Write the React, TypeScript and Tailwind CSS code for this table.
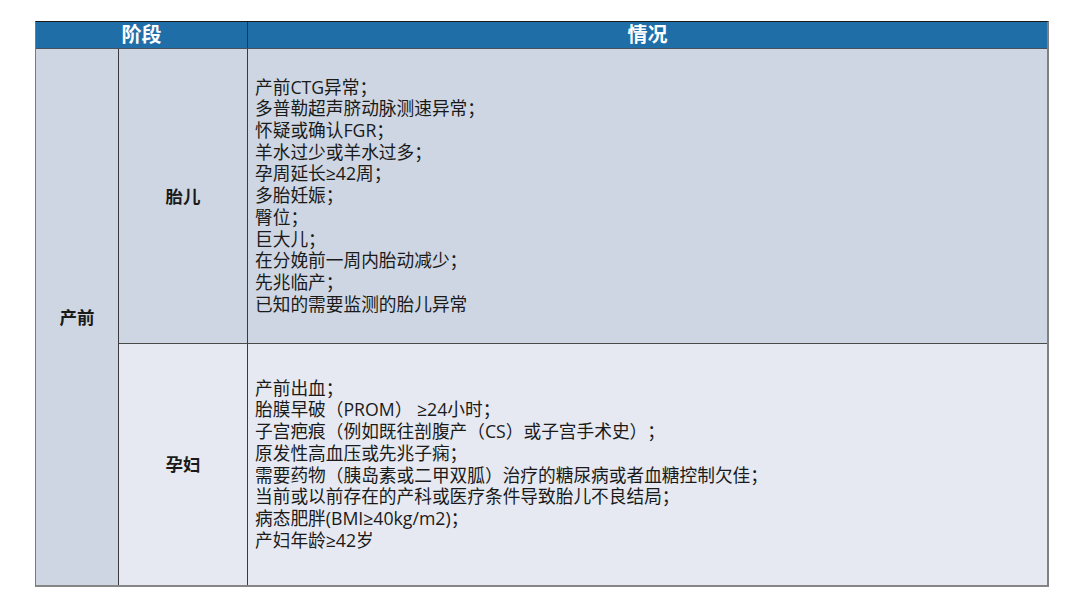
import React from "react";

const font = { fontFamily: '"Open Sans", "Noto Sans CJK SC", "Noto Sans", sans-serif' };

const fetal = [
  "产前CTG异常；",
  "多普勒超声脐动脉测速异常；",
  "怀疑或确认FGR；",
  "羊水过少或羊水过多；",
  "孕周延长≥42周；",
  "多胎妊娠；",
  "臀位；",
  "巨大儿；",
  "在分娩前一周内胎动减少；",
  "先兆临产；",
  "已知的需要监测的胎儿异常",
];

const maternal = [
  "产前出血；",
  "胎膜早破（PROM） ≥24小时；",
  "子宫疤痕（例如既往剖腹产（CS）或子宫手术史）；",
  "原发性高血压或先兆子痫；",
  "需要药物（胰岛素或二甲双胍）治疗的糖尿病或者血糖控制欠佳；",
  "当前或以前存在的产科或医疗条件导致胎儿不良结局；",
  "病态肥胖(BMI≥40kg/m2)；",
  "产妇年龄≥42岁",
];

export default function App() {
  return (
    <div className="w-[1080px] h-[608px] bg-white pt-[21px] pl-[35px] [text-spacing-trim:space-all]" style={font}>
      <div className="w-[1014px] border-t border-t-[#1a1a1a] border-l border-l-[#7a7a7a] border-r-2 border-r-[#808080] border-b-2 border-b-[#858585]">
        <div className="flex h-[27px] bg-[#1f6ea8] border-b border-b-[#4a4f5a] text-white font-bold text-[20px] leading-[26px]">
          <div className="w-[212px] border-r border-r-[#2a3340] flex items-center justify-center">阶段</div>
          <div className="flex-1 flex items-center justify-center">情况</div>
        </div>
        <div className="grid grid-cols-[83px_129px_1fr] grid-rows-[295px_241px] text-[#1a1a1a]">
          <div className="row-span-2 bg-[#cdd6e2] border-r border-r-[#3a3a3a] flex items-center justify-center font-bold text-[17.5px]">
            产前
          </div>
          <div className="bg-[#cdd6e2] border-r border-r-[#3a3a3a] border-b border-b-[#4a4a4a] flex items-center justify-center font-bold text-[17.5px]">
            胎儿
          </div>
          <div className="bg-[#cdd6e2] border-b border-b-[#4a4a4a] flex flex-col justify-center pl-[7px] text-[17.7px] leading-[21.7px]">
            {fetal.map((t) => (
              <div key={t} className="whitespace-pre">{t}</div>
            ))}
          </div>
          <div className="bg-[#e6e9f1] border-r border-r-[#3a3a3a] flex items-center justify-center font-bold text-[17.5px]">
            孕妇
          </div>
          <div className="bg-[#e6e9f1] flex flex-col justify-center pl-[7px] text-[17.7px] leading-[21.7px]">
            {maternal.map((t) => (
              <div key={t} className="whitespace-pre">{t}</div>
            ))}
          </div>
        </div>
      </div>
    </div>
  );
}
